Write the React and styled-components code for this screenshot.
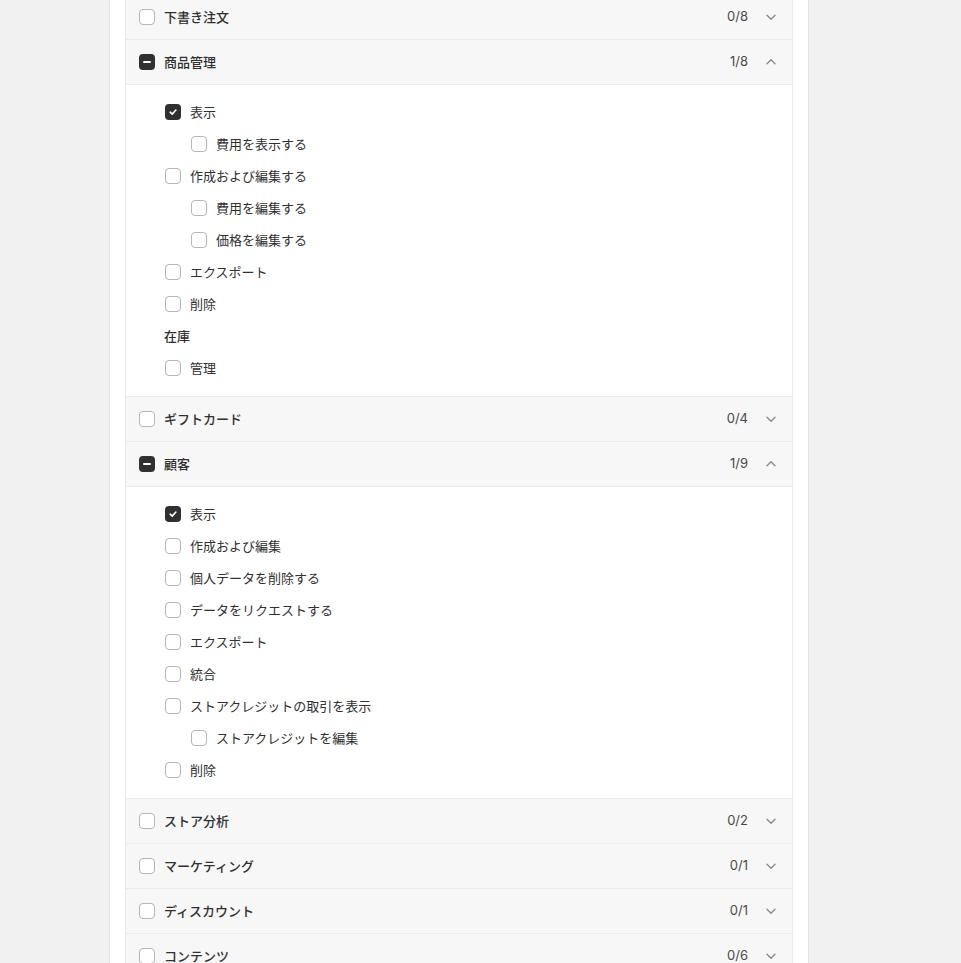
import React from "react";
import styled, { createGlobalStyle } from "styled-components";

const Global = createGlobalStyle`
  html, body { margin: 0; padding: 0; background: #f1f1f1; overflow: hidden; }
  body { font-family: "Inter", "Noto Sans CJK JP", sans-serif; font-size: 13px; color: #303030; -webkit-font-smoothing: antialiased; }
`;

const Page = styled.div`
  min-height: 963px;
  background: #f1f1f1;
  display: flex;
  align-items: flex-start;
`;

const Card = styled.div`
  width: 668px;
  margin: -21px 0 0 109px;
  padding: 15px;
  background: #ffffff;
  border: 1px solid #e3e3e3;
  border-top: none;
`;

const List = styled.div`
  border: 1px solid #ebebeb;
  border-bottom: none;
  display: flex;
  flex-direction: column;
`;

const Header = styled.div`
  height: 44px;
  display: flex;
  align-items: center;
  padding: 0 13px;
  background: #f7f7f7;
  border-bottom: 1px solid #ebebeb;
  gap: 9px;
`;

const HeaderLabel = styled.span`
  flex: 1;
  font-weight: 500;
  font-size: 13px;
  color: #303030;
  padding-bottom: 2px;
`;

const Count = styled.span`
  font-size: 13px;
  color: #4a4a4a;
  margin-right: 6px;
  padding-bottom: 2px;
`;

const Chevron = styled.svg`
  width: 16px;
  height: 16px;
  flex: none;
  display: block;
`;

const Body = styled.div`
  background: #ffffff;
  border-bottom: 1px solid #ebebeb;
  padding: 11px 0 12px 39px;
  display: flex;
  flex-direction: column;
`;

const Item = styled.div`
  height: 32px;
  display: flex;
  align-items: center;
  gap: 9px;
  padding-left: ${(p) => p.$level * 26}px;
  font-size: 13px;
  color: #303030;
`;

const ItemLabel = styled.span`
  padding-bottom: 2px;
`;

const SubHeading = styled.div`
  height: 32px;
  display: flex;
  align-items: center;
  margin-left: -1px;
  padding-bottom: 2px;
  box-sizing: border-box;
  font-weight: 500;
  font-size: 13px;
  color: #303030;
`;

const Box = styled.span`
  width: 16px;
  height: 16px;
  box-sizing: border-box;
  flex: none;
  border-radius: 4px;
  display: flex;
  align-items: center;
  justify-content: center;
  background: ${(p) => (p.$state === "off" ? "#ffffff" : "#303030")};
  border: ${(p) => (p.$state === "off" ? "1px solid #b5b5b5" : "none")};
`;

const Dash = styled.span`
  width: 8px;
  height: 2px;
  border-radius: 1px;
  background: #ffffff;
`;

function Check({ state = "off" }) {
  return (
    <Box $state={state}>
      {state === "on" && (
        <svg width="10" height="10" viewBox="0 0 10 10">
          <path d="M2.2 5.2 L4.2 7.1 L7.9 3" fill="none" stroke="#fff" strokeWidth="1.6" strokeLinecap="round" strokeLinejoin="round" />
        </svg>
      )}
      {state === "mixed" && <Dash />}
    </Box>
  );
}

function Group({ label, count, state = "off", open, children }) {
  return (
    <>
      <Header>
        <Check state={state} />
        <HeaderLabel>{label}</HeaderLabel>
        <Count>{count}</Count>
        <Chevron viewBox="0 0 16 16">
          <path
            d={open ? "M4 9.8 L8 5.8 L12 9.8" : "M4 6.2 L8 10.2 L12 6.2"}
            fill="none"
            stroke="#8a8a8a"
            strokeWidth="1.4"
            strokeLinecap="round"
            strokeLinejoin="round"
          />
        </Chevron>
      </Header>
      {open && <Body>{children}</Body>}
    </>
  );
}

function Opt({ label, level = 0, on }) {
  return (
    <Item $level={level}>
      <Check state={on ? "on" : "off"} />
      <ItemLabel>{label}</ItemLabel>
    </Item>
  );
}

export default function App() {
  return (
    <Page>
      <Global />
      <Card>
        <List>
          <Group label="下書き注文" count="0/8" />
          <Group label="商品管理" count="1/8" state="mixed" open>
            <Opt label="表示" on />
            <Opt label="費用を表示する" level={1} />
            <Opt label="作成および編集する" />
            <Opt label="費用を編集する" level={1} />
            <Opt label="価格を編集する" level={1} />
            <Opt label="エクスポート" />
            <Opt label="削除" />
            <SubHeading>在庫</SubHeading>
            <Opt label="管理" />
          </Group>
          <Group label="ギフトカード" count="0/4" />
          <Group label="顧客" count="1/9" state="mixed" open>
            <Opt label="表示" on />
            <Opt label="作成および編集" />
            <Opt label="個人データを削除する" />
            <Opt label="データをリクエストする" />
            <Opt label="エクスポート" />
            <Opt label="統合" />
            <Opt label="ストアクレジットの取引を表示" />
            <Opt label="ストアクレジットを編集" level={1} />
            <Opt label="削除" />
          </Group>
          <Group label="ストア分析" count="0/2" />
          <Group label="マーケティング" count="0/1" />
          <Group label="ディスカウント" count="0/1" />
          <Group label="コンテンツ" count="0/6" />
          <Group label="オンラインストア" count="0/3" />
        </List>
      </Card>
    </Page>
  );
}
